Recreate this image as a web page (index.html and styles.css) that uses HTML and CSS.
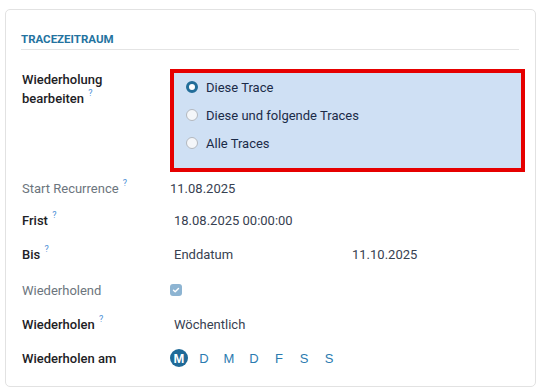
FILE: index.html
```html
<!DOCTYPE html>
<html lang="de">
<head>
    <meta charset="UTF-8">
    <title>Tracezeitraum</title>
    <link rel="stylesheet" href="styles.css">
</head>
<body>

<div class="card">
    <div class="group-title">Tracezeitraum</div>

    <!-- Wiederholung bearbeiten -->
    <div class="row row-edit">
        <div class="label">Wiederholung bearbeiten <sup>?</sup></div>
        <div class="value">
            <div class="choices">
                <div class="choice"><span class="radio checked"></span>Diese Trace</div>
                <div class="choice"><span class="radio"></span>Diese und folgende Traces</div>
                <div class="choice"><span class="radio"></span>Alle Traces</div>
            </div>
        </div>
    </div>

    <div class="row r-start">
        <div class="label muted">Start Recurrence <sup>?</sup></div>
        <div class="value">11.08.2025</div>
    </div>

    <div class="row r-frist">
        <div class="label">Frist <sup>?</sup></div>
        <div class="value pad">18.08.2025 00:00:00</div>
    </div>

    <div class="row r-bis">
        <div class="label">Bis <sup>?</sup></div>
        <div class="value pad split">
            <span class="until">Enddatum</span>
            <span>11.10.2025</span>
        </div>
    </div>

    <div class="row r-rep">
        <div class="label muted">Wiederholend</div>
        <div class="value">
            <span class="check">
                <svg width="8" height="8" viewBox="0 0 8 8"><path d="M1.5 4.2 L3.2 5.8 L6.5 2.4" fill="none" stroke="#fff" stroke-width="1.4" stroke-linecap="round" stroke-linejoin="round"/></svg>
            </span>
        </div>
    </div>

    <div class="row r-freq">
        <div class="label">Wiederholen <sup>?</sup></div>
        <div class="value pad">Wöchentlich</div>
    </div>

    <div class="row r-days">
        <div class="label">Wiederholen am</div>
        <div class="value days">
            <span class="day active">M</span>
            <span class="day">D</span>
            <span class="day">M</span>
            <span class="day">D</span>
            <span class="day">F</span>
            <span class="day">S</span>
            <span class="day">S</span>
        </div>
    </div>
</div>

</body>
</html>
```

FILE: styles.css
```css
body {
    margin: 0;
    padding: 9px 6px 0 5px;
    font-family: Roboto, "Liberation Sans", sans-serif;
    font-size: 13px;
    color: #212529;
    background-color: #fff;
    height: 392px;
    overflow: hidden;
    box-sizing: border-box;
}
.card {
    border: 1px solid #e2e2e2;
    border-radius: 5px;
    padding: 22px 15px 10px 15px;
    height: 378px;
    box-sizing: border-box;
}
.group-title {
    font-size: 11.5px;
    font-weight: 700;
    text-transform: uppercase;
    color: #24739f;
    padding: 0 0 3px 0;
    line-height: 14px;
    border-bottom: 1px solid #e4e4e4;
    margin-right: 1px;
    margin-bottom: 19px;
}
.row {
    display: grid;
    grid-template-columns: 149px 1fr;
    align-items: center;
}
.label {
    font-weight: 500;
    padding-left: 1px;
    line-height: 19px;
    color: #1d2125;
}
.label.muted {
    color: #6c757d;
    font-weight: 400;
}
sup {
    display: inline-block;
    font-size: 9px;
    line-height: 9px;
    color: #4d8fd6;
    font-weight: 400;
    vertical-align: top;
    margin-left: 1px;
}
.value {
    color: #374151;
}
.value.pad {
    padding-left: 4px;
}
.row-edit {
    align-items: start;
}
.row-edit .label {
    padding-top: 1px;
    max-width: 100px;
}
.choices {
    border: 4px solid #e60000;
    background-color: #cfe0f4;
    margin-right: -5px;
    padding: 0 0 11px 12px;
}
.choice {
    height: 28px;
    display: flex;
    align-items: center;
    color: #1b2b48;
}
.radio {
    width: 12px;
    height: 12px;
    border-radius: 50%;
    border: 1px solid #b3b8bf;
    background-color: #f4f6f9;
    box-sizing: border-box;
    margin-right: 8px;
}
.radio.checked {
    border: 3.5px solid #226d99;
    background-color: #fff;
}
.r-start { height: 32px; }
.r-frist { height: 32px; }
.r-bis { height: 36px; }
.r-rep { height: 36px; }
.r-freq { height: 32px; }
.r-days { height: 36px; }
.split {
    display: flex;
}
.until {
    width: 178px;
}
.check {
    display: flex;
    align-items: center;
    justify-content: center;
    width: 12px;
    height: 12px;
    border-radius: 3px;
    background-color: #8db4d2;
}
.days {
    display: flex;
    align-items: center;
}
.day {
    width: 18px;
    height: 18px;
    margin-right: 7px;
    display: flex;
    align-items: center;
    justify-content: center;
    font-family: "Liberation Sans", Arial, sans-serif;
    font-size: 13px;
    color: #2b7bb0;
}
.day.active {
    border-radius: 50%;
    background-color: #1f6a98;
    color: #fff;
    font-weight: 700;
}
```
